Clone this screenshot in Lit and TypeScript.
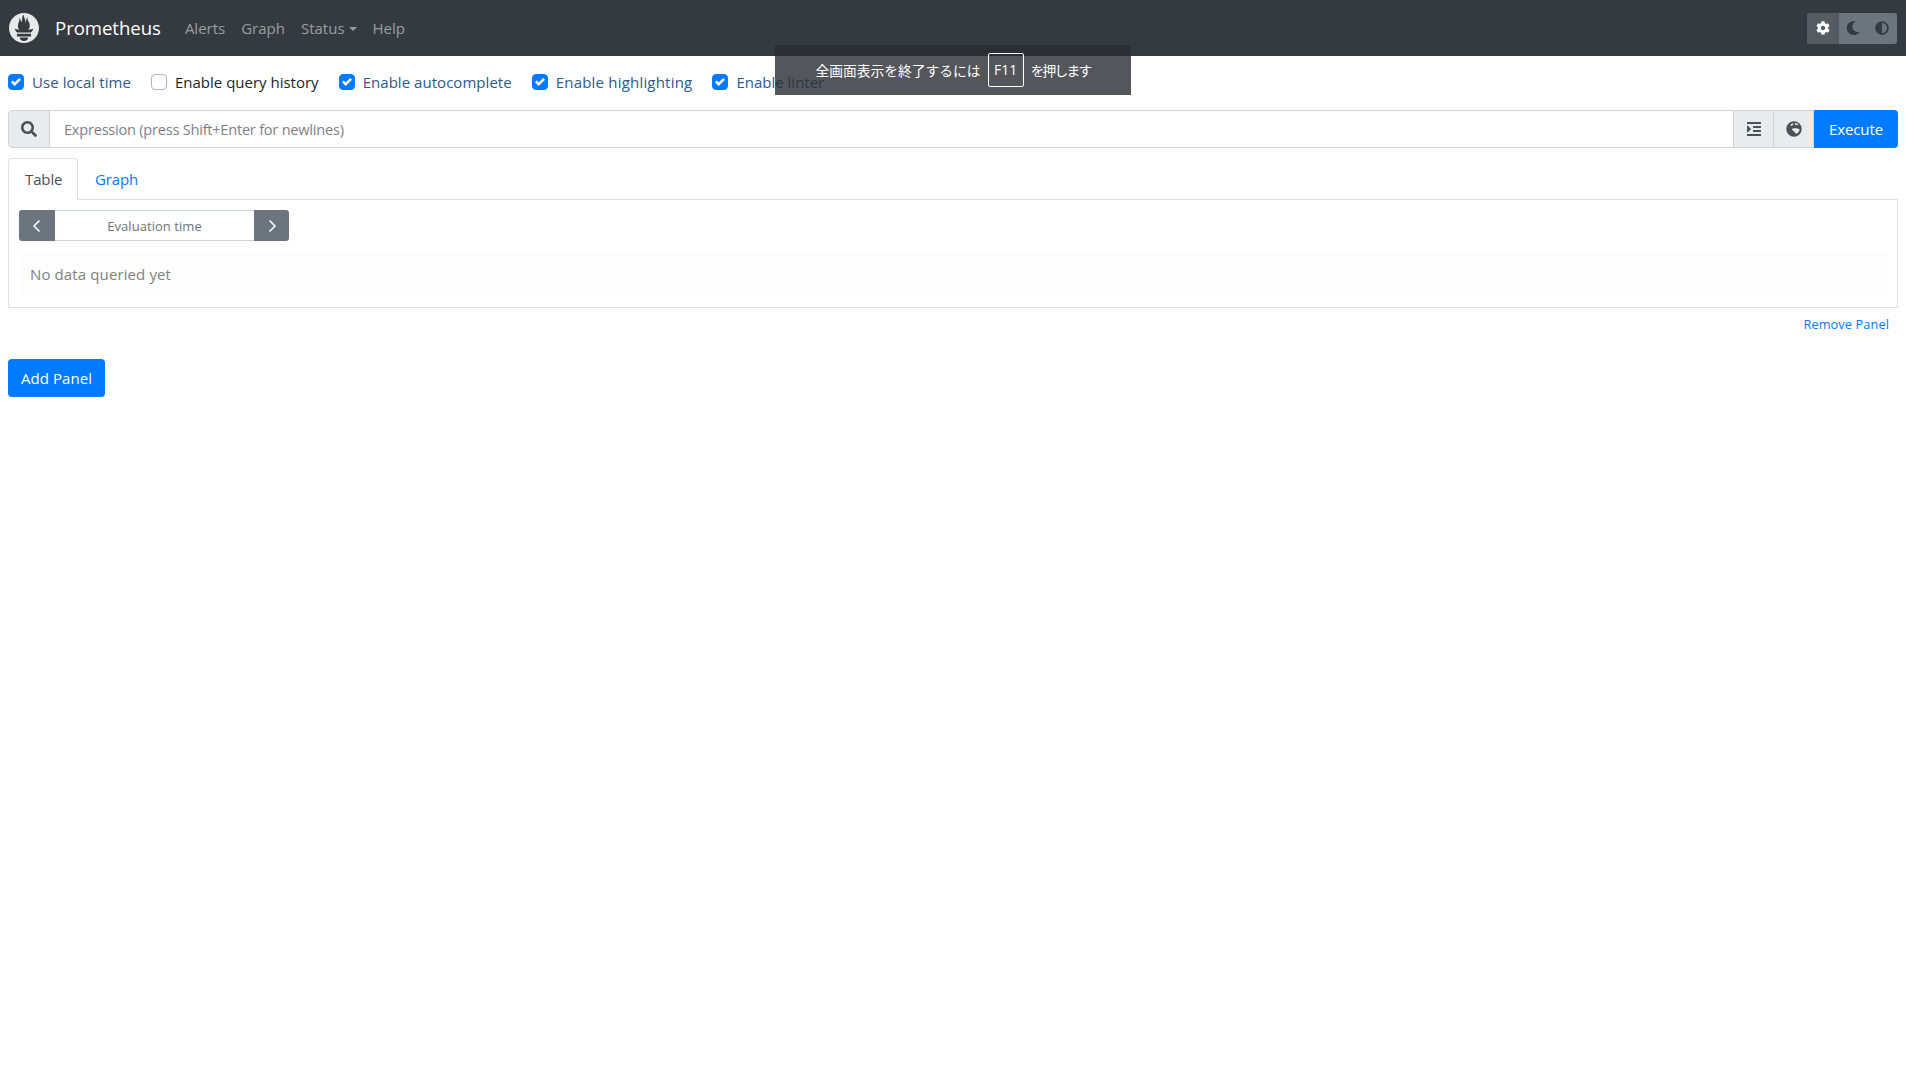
import { LitElement, html, css, svg } from "lit";
import { customElement } from "lit/decorators.js";

const icon = (vb: string, d: string, cls = "") =>
  html`<svg class="ic ${cls}" viewBox="${vb}" fill="currentColor" fill-rule="evenodd" aria-hidden="true">${svg`<path d="${d}"></path>`}</svg>`;

const LOGO =
  "M12 0C5.373 0 0 5.372 0 12c0 6.627 5.373 12 12 12s12-5.373 12-12c0-6.628-5.373-12-12-12zm0 22.46c-1.885 0-3.414-1.26-3.414-2.814h6.828c0 1.553-1.528 2.813-3.414 2.813zm5.64-3.745H6.36v-2.046h11.28v2.046zm-.04-3.098H6.391c-.037-.043-.075-.086-.111-.13-1.155-1.401-1.427-2.133-1.69-2.879-.005-.025 1.4.287 2.395.511 0 0 .513.119 1.262.255-.72-.843-1.147-1.915-1.147-3.01 0-2.406 1.845-4.508 1.18-6.207.648.053 1.34 1.367 1.387 3.422.689-.951.977-2.69.977-3.755 0-1.103.727-2.385 1.454-2.429-.648 1.069.168 1.984.894 4.256.272.854.237 2.29.447 3.201.07-1.892.395-4.652 1.595-5.605-.529 1.2.079 2.702.494 3.424.671 1.164 1.078 2.047 1.078 3.716a4.642 4.642 0 01-1.11 2.996c.792-.149 1.34-.283 1.34-.283l2.573-.502s-.374 1.538-1.81 3.019z";
const COG =
  "M487.4 315.7l-42.6-24.6c4.3-23.2 4.3-47 0-70.2l42.6-24.6c4.9-2.8 7.1-8.6 5.5-14-11.1-35.6-30-67.8-54.7-94.6-3.8-4.1-10-5.1-14.8-2.3L380.8 110c-17.9-15.4-38.5-27.3-60.8-35.1V25.8c0-5.6-3.9-10.5-9.4-11.7-36.7-8.2-74.3-7.8-109.2 0-5.5 1.2-9.4 6.1-9.4 11.7V75c-22.2 7.9-42.8 19.8-60.8 35.1L88.7 85.5c-4.9-2.8-11-1.9-14.8 2.3-24.7 26.7-43.6 58.9-54.7 94.6-1.7 5.4.6 11.2 5.5 14L67.3 221c-4.3 23.2-4.3 47 0 70.2l-42.6 24.6c-4.9 2.8-7.1 8.6-5.5 14 11.1 35.6 30 67.8 54.7 94.6 3.8 4.1 10 5.1 14.8 2.3l42.6-24.6c17.9 15.4 38.5 27.3 60.8 35.1v49.2c0 5.6 3.9 10.5 9.4 11.7 36.7 8.2 74.3 7.8 109.2 0 5.5-1.2 9.4-6.1 9.4-11.7v-49.2c22.2-7.9 42.8-19.8 60.8-35.1l42.6 24.6c4.9 2.8 11 1.9 14.8-2.3 24.7-26.7 43.6-58.9 54.7-94.6 1.5-5.5-.7-11.3-5.6-14.1zM256 336c-44.1 0-80-35.9-80-80s35.9-80 80-80 80 35.9 80 80-35.9 80-80 80z";
const MOON =
  "M283.211 512c78.962 0 151.079-35.925 198.857-94.792 7.068-8.708-.639-21.43-11.562-19.35-124.203 23.654-238.262-71.576-238.262-196.954 0-72.222 38.662-138.635 101.498-174.394 9.686-5.512 7.25-20.197-3.756-22.23A258.156 258.156 0 0 0 283.211 0c-141.309 0-256 114.511-256 256 0 141.309 114.511 256 256 256z";
const ADJUST =
  "M8 256c0 136.966 111.033 248 248 248s248-111.034 248-248S392.966 8 256 8 8 119.033 8 256zm248 184V72c101.705 0 184 82.311 184 184 0 101.705-82.311 184-184 184z";
const SEARCH =
  "M505 442.7L405.3 343c-4.5-4.5-10.6-7-17-7H372c27.6-35.3 44-79.7 44-128C416 93.1 322.9 0 208 0S0 93.1 0 208s93.1 208 208 208c48.3 0 92.7-16.4 128-44v16.3c0 6.4 2.5 12.5 7 17l99.7 99.7c9.4 9.4 24.6 9.4 33.9 0l28.3-28.3c9.4-9.4 9.4-24.6.1-34zM208 336c-70.7 0-128-57.2-128-128 0-70.7 57.2-128 128-128 70.7 0 128 57.2 128 128 0 70.7-57.2 128-128 128z";
const INDENT =
  "M27.31 363.3l96-96a16 16 0 0 0 0-22.62l-96-96C17.27 138.66 0 145.78 0 160v192c0 14.31 17.33 21.3 27.31 11.3zM432 416H16a16 16 0 0 0-16 16v32a16 16 0 0 0 16 16h416a16 16 0 0 0 16-16v-32a16 16 0 0 0-16-16zm3.17-128H204.83A12.82 12.82 0 0 0 192 300.83v38.34A12.82 12.82 0 0 0 204.83 352h230.34A12.82 12.82 0 0 0 448 339.17v-38.34A12.82 12.82 0 0 0 435.17 288zm0-128H204.83A12.82 12.82 0 0 0 192 172.83v38.34A12.82 12.82 0 0 0 204.83 224h230.34A12.82 12.82 0 0 0 448 211.17v-38.34A12.82 12.82 0 0 0 435.17 160zM432 32H16A16 16 0 0 0 0 48v32a16 16 0 0 0 16 16h416a16 16 0 0 0 16-16V48a16 16 0 0 0-16-16z";
const GLOBE =
  "M248 8a248 248 0 1 0 0 496a248 248 0 1 0 0-496z" +
  "M285 62l62 18 50 45-40 12-30-25-40 15-20-32z" +
  "M150 100l60-25 20 30-50 45-45 5z" +
  "M180 250c40-20 90-25 150-15 40 10 70 30 100 30-5 60-55 130-115 145-20-20-30-50-60-70-30-20-70-40-75-90z";

const CHECKS = [
  ["Use local time", true, 0.08],
  ["Enable query history", false, 0],
  ["Enable autocomplete", true, 0.04],
  ["Enable highlighting", true, 0.2],
  ["Enable linter", true, 0],
] as const;

@customElement("app-root")
export class AppRoot extends LitElement {
  static styles = css`
    :host {
      display: block;
      position: relative;
      min-height: 1076px;
      background: #fff;
      color: #212529;
      font-family: "Open Sans", "Noto Sans", sans-serif;
      font-size: 15px;
      line-height: 24px;
    }
    * { box-sizing: border-box; }
    .ic { display: block; }

    .nav {
      height: 56px;
      background: #343a40;
      display: flex;
      align-items: center;
      padding: 0 9px 0 9px;
    }
    .logo { width: 30px; height: 30px; color: #e9e9e9; margin-right: 16px; }
    .brand { font-size: 18.6px; color: #fff; margin-right: 16px; letter-spacing: -0.05px; }
    .link { color: rgba(255, 255, 255, 0.5); padding: 0 8px; font-size: 15px; letter-spacing: 0; }
    .caret {
      display: inline-block;
      margin-left: 4px;
      vertical-align: 3px;
      border-top: 4.5px solid currentColor;
      border-left: 4.5px solid transparent;
      border-right: 4.5px solid transparent;
    }
    .theme {
      margin-left: auto;
      display: flex;
      height: 31px;
      border-radius: 3px;
      overflow: hidden;
      background: #6c757d;
      color: #343a40;
    }
    .theme div { width: 29px; display: flex; align-items: center; justify-content: center; padding-right: 2px; }
    .theme .on { width: 32px; background: #545b62; color: #fff; padding-right: 0; }
    .theme .ic { width: 14px; height: 14px; }

    .main { padding: 0 8px; }
    .opts { display: flex; align-items: center; height: 54px; padding-bottom: 2px; gap: 20px; }
    .opt { display: flex; align-items: center; gap: 8px; color: #212529; white-space: nowrap; }
    .opt.on { color: #2c5a8c; }
    .box {
      width: 16px;
      height: 16px;
      border-radius: 4px;
      border: 1px solid #adb5bd;
      background: #fff;
      flex: none;
      display: flex;
      align-items: center;
      justify-content: center;
    }
    .on .box { background: #007bff; border-color: #007bff; }
    .box svg { width: 10px; height: 10px; }

    .group { display: flex; height: 38px; }
    .addon {
      background: #e9ecef;
      border: 1px solid #ced4da;
      color: #495057;
      display: flex;
      align-items: center;
      justify-content: center;
    }
    .addon.search { width: 42px; border-radius: 4px 0 0 4px; }
    .addon.search .ic { width: 16px; height: 16px; }
    .addon.tool { width: 41px; margin-left: -1px; }
    .addon.tool .ic { width: 16px; height: 16px; }
    .expr {
      flex: 1;
      border: 1px solid #ced4da;
      border-left: 0;
      padding: 0 14px;
      display: flex;
      align-items: center;
      color: #7b8289;
      letter-spacing: -0.24px;
      font-size: 14.6px;
    }
    .exec {
      width: 84px;
      background: #007bff;
      color: #fff;
      border-radius: 0 4px 4px 0;
      display: flex;
      align-items: center;
      justify-content: center;
      letter-spacing: -0.12px;
    }

    .tabs { display: flex; height: 41px; margin-top: 10px; position: relative; }
    .tab { padding: 9px 17px 0 17px; color: #007bff; letter-spacing: -0.12px; }
    .tab.active {
      color: #495057;
      background: #fff;
      border: 1px solid #dee2e6;
      border-bottom: 0;
      border-radius: 4px 4px 0 0;
      padding: 8px 16px 0;
      width: 70px;
      margin-bottom: -1px;
      position: relative;
      z-index: 1;
    }
    .panel {
      border: 1px solid #dee2e6;
      height: 109px;
      padding: 10px;
    }
    .evalrow { display: flex; width: 270px; height: 31px; font-size: 13px; }
    .arrow {
      width: 36px;
      background: #6c757d;
      color: #fff;
      display: flex;
      align-items: center;
      justify-content: center;
    }
    .arrow.l { border-radius: 3px 0 0 3px; }
    .arrow.r { border-radius: 0 3px 3px 0; width: 35px; }
    .arrow svg { width: 16px; height: 16px; }
    .evalinput {
      flex: 1;
      border-top: 1px solid #ced4da;
      border-bottom: 1px solid #ced4da;
      display: flex;
      align-items: center;
      justify-content: center;
      color: #6c757d;
      letter-spacing: 0.05px;
    }
    .nodata {
      margin-top: 11px;
      background: #fdfdfe;
      height: 45px;
      padding: 0 11px 2px;
      display: flex;
      align-items: center;
      color: #818182;
      letter-spacing: 0.12px;
    }
    .remove { display: flex; justify-content: flex-end; padding: 4px 9px 0 0; font-size: 12.8px; color: #007bff; letter-spacing: 0.08px; height: 51px; }
    .add {
      width: 97px;
      height: 38px;
      border-radius: 4px;
      background: #007bff;
      color: #fff;
      display: flex;
      align-items: center;
      justify-content: center;
      letter-spacing: 0.08px;
    }

    .fs {
      position: absolute;
      left: 775px;
      top: 45px;
      width: 356px;
      height: 50px;
      background: rgba(42, 44, 50, 0.8);
      color: #fff;
      font-family: "Noto Sans CJK JP", "Noto Sans", sans-serif;
      font-size: 13.75px;
      display: flex;
      align-items: center;
      justify-content: center;
      gap: 7px;
    }
    .tail { letter-spacing: -1.8px; }
    .key {
      height: 34px;
      width: 36px;
      border: 1px solid #fff;
      border-radius: 2px;
      display: flex;
      align-items: center;
      justify-content: center;
      font-family: "Open Sans", sans-serif;
      font-size: 14px;
    }
  `;

  render() {
    return html`
      <div class="nav">
        ${icon("0 0 24 24", LOGO, "logo")}
        <span class="brand">Prometheus</span>
        <span class="link">Alerts</span>
        <span class="link">Graph</span>
        <span class="link">Status<i class="caret"></i></span>
        <span class="link">Help</span>
        <div class="theme">
          <div class="on">${icon("0 0 512 512", COG)}</div>
          <div>${icon("0 0 512 512", MOON)}</div>
          <div>${icon("0 0 512 512", ADJUST)}</div>
        </div>
      </div>
      <div class="main">
        <div class="opts">
          ${CHECKS.map(
            ([label, on, track]) => html`<div class="opt ${on ? "on" : ""}" style="letter-spacing:${track}px">
              <span class="box">
                ${on
                  ? html`<svg viewBox="0 0 8 8"><path fill="#fff" d="M6.564.75l-3.59 3.612-1.538-1.55L0 4.26 2.974 7.25 8 2.193z"></path></svg>`
                  : ""}
              </span>
              ${label}
            </div>`,
          )}
        </div>
        <div class="group">
          <div class="addon search">${icon("0 0 512 512", SEARCH)}</div>
          <div class="expr">Expression (press Shift+Enter for newlines)</div>
          <div class="addon tool">${icon("0 0 448 512", INDENT)}</div>
          <div class="addon tool">${icon("0 0 496 512", GLOBE)}</div>
          <div class="exec">Execute</div>
        </div>
        <div class="tabs">
          <div class="tab active">Table</div>
          <div class="tab">Graph</div>
        </div>
        <div class="panel">
          <div class="evalrow">
            <div class="arrow l">
              <svg viewBox="0 0 16 16" fill="none" stroke="currentColor" stroke-width="1.5"><path d="M10.5 2.5 5 8l5.5 5.5"></path></svg>
            </div>
            <div class="evalinput">Evaluation time</div>
            <div class="arrow r">
              <svg viewBox="0 0 16 16" fill="none" stroke="currentColor" stroke-width="1.5"><path d="M5.5 2.5 11 8l-5.5 5.5"></path></svg>
            </div>
          </div>
          <div class="nodata">No data queried yet</div>
        </div>
        <div class="remove">Remove Panel</div>
        <div class="add">Add Panel</div>
      </div>
      <div class="fs">
        <span>全画面表示を終了するには</span>
        <span class="key">F11</span>
        <span class="tail">を押します</span>
      </div>
    `;
  }
}
